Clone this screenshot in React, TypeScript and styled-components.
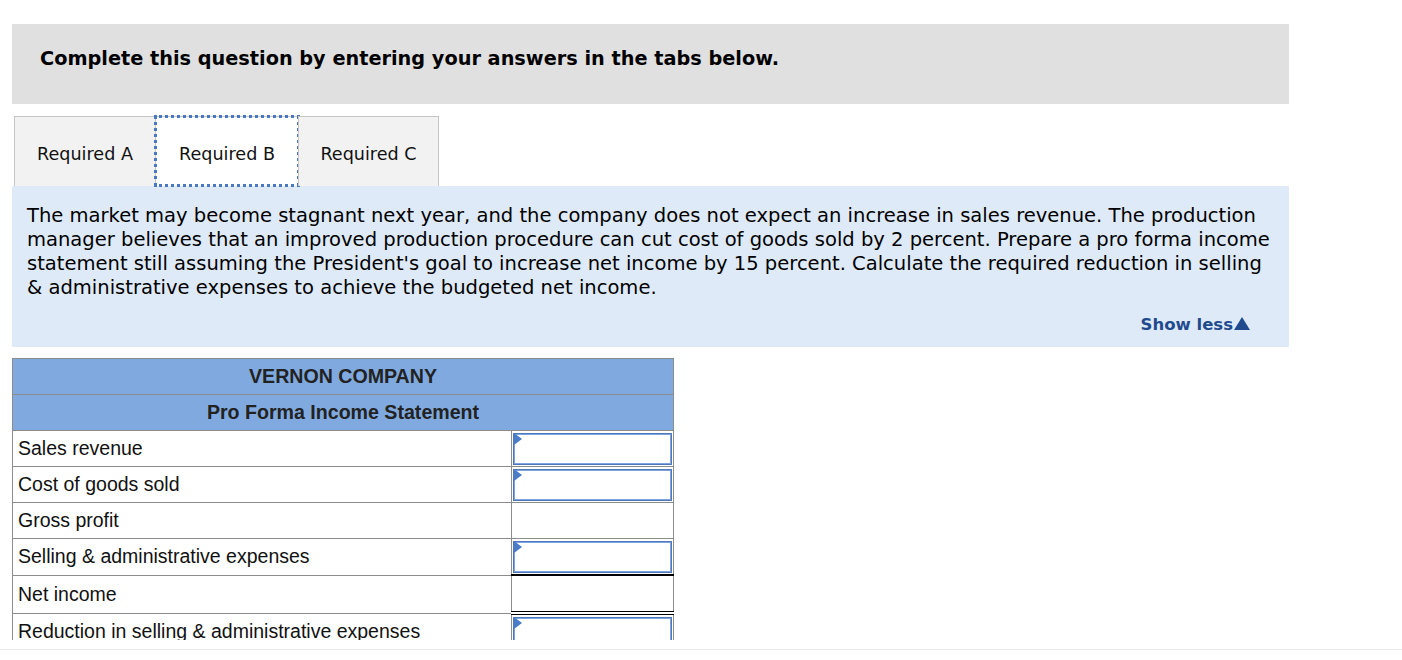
import styled, { createGlobalStyle } from "styled-components";

const GlobalStyle = createGlobalStyle`
  html, body {
    margin: 0;
    padding: 0;
    background: #fff;
    height: 660px;
    overflow: hidden;
  }
`;

const Page = styled.div`
  height: 650px;
  border-bottom: 1px solid #ececec;
  padding: 24px 0 0 12px;
  box-sizing: border-box;
  font-family: "DejaVu Sans", Verdana, sans-serif;
  color: #000;
`;

const Column = styled.div`
  width: 1277px;
`;

const Banner = styled.div`
  height: 80px;
  background: #e0e0e0;
  display: flex;
  align-items: center;
  padding-left: 28px;
  font-weight: bold;
  font-size: 19.3px;
  padding-bottom: 12px;
  box-sizing: border-box;
`;

const TabRow = styled.div`
  display: flex;
  margin-top: 12px;
  padding-left: 3px;
`;

const Tab = styled.button<{ $active?: boolean; $w: number }>`
  width: ${(p) => p.$w}px;
  height: 70px;
  box-sizing: border-box;
  font-family: "DejaVu Sans", Verdana, sans-serif;
  font-size: 17.6px;
  color: #111;
  background: ${(p) => (p.$active ? "#fff" : "#f2f2f2")};
  border: 1px solid #c6c6c6;
  border-bottom: none;
  outline: ${(p) => (p.$active ? "3px dotted #4a78c2" : "none")};
  outline-offset: -2px;
  padding: 4px 0 0;
  margin-left: -1px;
  cursor: pointer;
`;

const Panel = styled.div`
  background: #deeaf8;
  height: 161px;
  box-sizing: border-box;
  padding: 18px 0 0 15px;
  display: flex;
  flex-direction: column;
`;

const Prompt = styled.p`
  margin: 0;
  font-size: 19.55px;
  line-height: 24px;
  width: 1250px;
`;

const ShowLess = styled.a`
  align-self: flex-end;
  margin: 15px 39px 0 0;
  color: #1f4b8e;
  font-weight: bold;
  font-size: 16.5px;
  cursor: pointer;
  display: flex;
  align-items: center;
  gap: 1px;
`;

const Caret = styled.span`
  width: 0;
  height: 0;
  border-left: 8px solid transparent;
  border-right: 8px solid transparent;
  border-bottom: 13px solid #1f4b8e;
  margin-bottom: 2px;
`;

const TableClip = styled.div`
  margin-top: 11px;
  height: 282px;
  overflow: hidden;
`;

const Sheet = styled.table`
  width: 662px;
  border-collapse: collapse;
  font-family: "Liberation Sans", Arial, sans-serif;
  font-size: 19.5px;
  color: #111;
`;

const HeadCell = styled.th`
  background: #80aadf;
  border: 1px solid #8c8c8c;
  height: 35px;
  padding: 0;
  font-weight: bold;
  font-size: 19.6px;
  color: #222;
`;

const Label = styled.td`
  border: 1px solid #8c8c8c;
  width: 493px;
  height: 35px;
  padding: 0 0 0 5px;
`;

const Value = styled.td<{ $total?: boolean }>`
  border: 1px solid #8c8c8c;
  border-top: ${(p) => (p.$total ? "2px solid #000" : "1px solid #8c8c8c")};
  border-bottom: ${(p) => (p.$total ? "4px double #000" : "1px solid #8c8c8c")};
  padding: 1px;
  height: 33px;
  position: relative;
`;

const Entry = styled.div`
  height: 32px;
  box-sizing: border-box;
  border: 2px solid #7fa3dc;
  outline: 1px solid #5077b9;
  outline-offset: -1px;
  background: #fff;
`;

const Marker = styled.span`
  position: absolute;
  left: 2px;
  top: 2px;
  width: 0;
  height: 0;
  border-top: 6px solid transparent;
  border-bottom: 6px solid transparent;
  border-left: 8px solid #4a7cc8;
`;

const rows: { label: string; input?: boolean; total?: boolean }[] = [
  { label: "Sales revenue", input: true },
  { label: "Cost of goods sold", input: true },
  { label: "Gross profit" },
  { label: "Selling & administrative expenses", input: true },
  { label: "Net income", total: true },
  { label: "Reduction in selling & administrative expenses", input: true },
];

export default function App() {
  return (
    <>
      <GlobalStyle />
      <Page>
        <Column>
          <Banner>Complete this question by entering your answers in the tabs below.</Banner>
          <TabRow>
            <Tab $w={142}>Required A</Tab>
            <Tab $w={144} $active>Required B</Tab>
            <Tab $w={141}>Required C</Tab>
          </TabRow>
          <Panel>
            <Prompt>
              The market may become stagnant next year, and the company does not expect an increase in
              sales revenue. The production manager believes that an improved production procedure can cut
              cost of goods sold by 2 percent. Prepare a pro forma income statement still assuming the
              President's goal to increase net income by 15 percent. Calculate the required reduction in
              selling &amp; administrative expenses to achieve the budgeted net income.
            </Prompt>
            <ShowLess>
              Show less
              <Caret />
            </ShowLess>
          </Panel>
          <TableClip>
            <Sheet>
              <thead>
                <tr>
                  <HeadCell colSpan={2}>VERNON COMPANY</HeadCell>
                </tr>
                <tr>
                  <HeadCell colSpan={2}>Pro Forma Income Statement</HeadCell>
                </tr>
              </thead>
              <tbody>
                {rows.map((r) => (
                  <tr key={r.label}>
                    <Label>{r.label}</Label>
                    <Value $total={r.total}>
                      {r.input && (
                        <>
                          <Entry />
                          <Marker />
                        </>
                      )}
                    </Value>
                  </tr>
                ))}
              </tbody>
            </Sheet>
          </TableClip>
        </Column>
      </Page>
    </>
  );
}
